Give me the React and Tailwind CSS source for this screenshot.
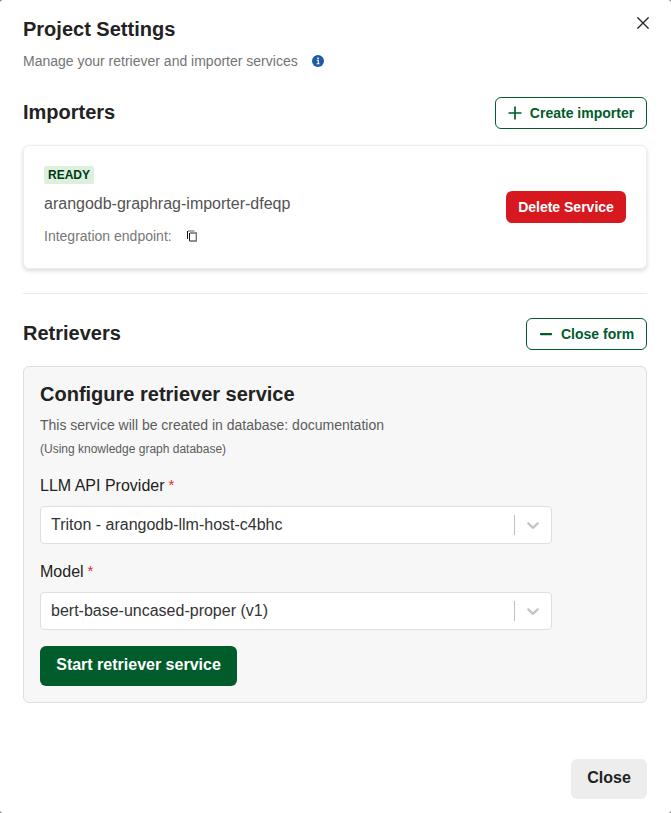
import React from "react";

function PlusIcon() {
  return (
    <svg width="14" height="14" viewBox="0 0 14 14" className="shrink-0">
      <path d="M7 0.500V13.500M0.500 7H13.500" stroke="currentColor" strokeWidth="1.700" fill="none" />
    </svg>
  );
}

function MinusIcon() {
  return (
    <svg width="12" height="12" viewBox="0 0 12 12" className="shrink-0">
      <rect x="0" y="5" width="12" height="2.200" rx="0.600" fill="currentColor" />
    </svg>
  );
}

function InfoIcon() {
  return (
    <svg width="12" height="12" viewBox="0 0 12 12" className="shrink-0">
      <circle cx="6" cy="6" r="6" fill="#1f5aa8" />
      <rect x="5.200" y="2.500" width="1.700" height="1.600" rx="0.500" fill="white" />
      <path d="M4.700 5.300H6.300V8.600M4.600 8.800H7.600" stroke="white" strokeWidth="1.100" fill="none" />
    </svg>
  );
}

function CopyIcon() {
  return (
    <svg width="12" height="12" viewBox="0 0 12 12" className="shrink-0" fill="none">
      <path d="M1.500 9V1" stroke="#171717" />
      <path d="M2 1H8.500" stroke="#8a8a8a" strokeWidth="1.400" />
      <path d="M3.500 11V3" stroke="#171717" />
      <path d="M4 3H10.300V11H3.500" stroke="#6c6c6c" strokeWidth="1.300" />
    </svg>
  );
}

function CloseIcon() {
  return (
    <svg width="12" height="12" viewBox="0 0 12 12">
      <path d="M0.400 0.400L11.600 11.600M11.600 0.400L0.400 11.600" stroke="#222428" strokeWidth="1.350" />
    </svg>
  );
}

function Field({ label, value }) {
  return (
    <div className="mb-4 w-[512px]">
      <div className="flex h-6 items-center text-base leading-6 text-[#222]">
        {label}
        <span className="mb-0.5 ml-1 text-[15px] text-[#e5292e]">*</span>
      </div>
      <div className="mt-2 flex h-[38px] items-center rounded border border-[#dedfe0] bg-white">
        <span className="flex-1 pl-2.5 text-base leading-6 text-[#333]">{value}</span>
        <span className="h-5 w-px bg-[#bfbfbf]" />
        <span className="flex w-9 justify-center">
          <svg width="20" height="20" viewBox="0 0 20 20" fill="#c4c4c4">
            <path d="M4.516 7.548c0.436-0.446 1.043-0.481 1.576 0l3.908 3.747 3.908-3.747c0.533-0.481 1.141-0.446 1.574 0 0.436 0.445 0.408 1.197 0 1.615-0.406 0.418-4.695 4.502-4.695 4.502-0.217 0.223-0.502 0.335-0.787 0.335s-0.570-0.112-0.789-0.335c0 0-4.287-4.084-4.695-4.502s-0.436-1.170 0-1.615z" />
          </svg>
        </span>
      </div>
    </div>
  );
}

export default function App() {
  return (
    <div className="h-[813px] w-[671px] bg-[#777]">
      <div
        role="dialog"
        className="flex h-full flex-col rounded-[3px] bg-white pr-6 pl-[23px] font-['Liberation_Sans',Arial,sans-serif] text-[#222]"
      >
        <header className="flex h-[77px] items-start justify-between">
          <div className="pt-[17px]">
            <h1 className="text-xl leading-6 font-bold">Project Settings</h1>
            <div className="mt-2.5 flex items-center gap-3.5 text-sm leading-5 text-[#747474]">
              <span>Manage your retriever and importer services</span>
              <InfoIcon />
            </div>
          </div>
          <button aria-label="Dismiss" className="mt-[17px] -mr-0.5">
            <CloseIcon />
          </button>
        </header>

        <section className="mt-5">
          <div className="flex h-8 items-center justify-between">
            <h2 className="pb-0.5 text-xl leading-6 font-bold">Importers</h2>
            <button className="flex h-8 w-[152px] items-center justify-center gap-2 rounded-md border border-[#005c2b] text-sm font-bold text-[#005c2b]">
              <PlusIcon />
              <span>Create importer</span>
            </button>
          </div>
          <div className="mt-4 flex h-[124px] items-center justify-between rounded-md border border-[#eeeeee] bg-white px-5 shadow-[0_2px_4px_rgba(0,0,0,0.15)]">
            <div className="flex flex-col items-start pb-0.5">
              <span className="flex h-[18px] items-center rounded-xs bg-[#dcf0dc] px-1 text-xs font-bold text-[#00391a]">
                READY
              </span>
              <p className="mt-2 text-base leading-6 text-[#535353]">arangodb-graphrag-importer-dfeqp</p>
              <div className="mt-2.5 flex items-center gap-3.5 text-sm leading-5 text-[#777]">
                <span>Integration endpoint:</span>
                <CopyIcon />
              </div>
            </div>
            <button className="h-8 w-[120px] rounded-md bg-[#d7191f] text-sm font-bold text-white">
              Delete Service
            </button>
          </div>
        </section>

        <hr className="mt-6 border-[#e9eaeb]" />

        <section className="mt-6">
          <div className="flex h-8 items-center justify-between">
            <h2 className="pb-0.5 text-xl leading-6 font-bold">Retrievers</h2>
            <button className="flex h-8 w-[121px] items-center gap-[9px] rounded-md border border-[#005c2b] pl-[13px] text-sm font-bold text-[#005c2b]">
              <MinusIcon />
              <span>Close form</span>
            </button>
          </div>
          <div className="mt-4 h-[337px] rounded-md border border-[#dedfe0] bg-[#f7f7f7] px-4 pt-[15px]">
            <h3 className="text-xl leading-6 font-bold">Configure retriever service</h3>
            <p className="mt-[9px] text-sm leading-5 text-[#5c5c5c]">
              This service will be created in database: documentation
            </p>
            <p className="mt-[5px] mb-4 text-xs leading-[18px] text-[#5c5c5c]">(Using knowledge graph database)</p>
            <Field label="LLM API Provider" value="Triton - arangodb-llm-host-c4bhc" />
            <Field label="Model" value="bert-base-uncased-proper (v1)" />
            <button className="h-10 w-[197px] rounded-md bg-[#005c2b] pb-0.5 text-base font-bold text-white">
              Start retriever service
            </button>
          </div>
        </section>

        <footer className="mt-14 flex justify-end">
          <button className="h-10 w-[76px] rounded-md bg-[#ededed] pb-0.5 text-base font-bold">Close</button>
        </footer>
      </div>
    </div>
  );
}
